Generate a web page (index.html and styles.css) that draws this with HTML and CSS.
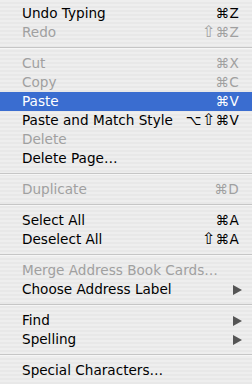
FILE: index.html
```html
<!DOCTYPE html>
<html>
<head>
<meta charset="utf-8">
<link rel="stylesheet" href="styles.css">
</head>
<body>
<div class="menu">
  <div class="item"><span class="label">Undo Typing</span><span class="key">⌘Z</span></div>
  <div class="item off"><span class="label">Redo</span><span class="key"><span class="shift">⇧</span>⌘Z</span></div>
  <div class="sep"></div>
  <div class="item off"><span class="label">Cut</span><span class="key">⌘X</span></div>
  <div class="item off"><span class="label">Copy</span><span class="key">⌘C</span></div>
  <div class="item sel"><span class="label">Paste</span><span class="key">⌘V</span></div>
  <div class="item"><span class="label">Paste and Match Style</span><span class="key">⌥<span class="shift">⇧</span>⌘V</span></div>
  <div class="item off"><span class="label">Delete</span></div>
  <div class="item"><span class="label">Delete Page…</span></div>
  <div class="sep"></div>
  <div class="item off"><span class="label">Duplicate</span><span class="key">⌘D</span></div>
  <div class="sep"></div>
  <div class="item"><span class="label">Select All</span><span class="key">⌘A</span></div>
  <div class="item"><span class="label">Deselect All</span><span class="key"><span class="shift">⇧</span>⌘A</span></div>
  <div class="sep"></div>
  <div class="item off"><span class="label">Merge Address Book Cards…</span></div>
  <div class="item"><span class="label">Choose Address Label</span><span class="arrow"></span></div>
  <div class="sep"></div>
  <div class="item"><span class="label">Find</span><span class="arrow"></span></div>
  <div class="item"><span class="label">Spelling</span><span class="arrow"></span></div>
  <div class="sep"></div>
  <div class="item"><span class="label">Special Characters…</span></div>
</div>
</body>
</html>
```
FILE: styles.css
```css
html, body {
  margin: 0;
  padding: 0;
  width: 252px;
  height: 384px;
  overflow: hidden;
}
body {
  background: repeating-linear-gradient(to bottom, #eeeeee 0, #eeeeee 2px, #e8e8e8 2px, #e8e8e8 4px);
  font-family: "DejaVu Sans", "Liberation Sans", sans-serif;
  font-size: 13.6px;
  color: #000;
}
.menu {
  display: flex;
  flex-direction: column;
  padding-top: 4px;
}
.item {
  height: 19px;
  display: flex;
  align-items: center;
  padding: 0 13px 0 22px;
  line-height: 19px;
}
.item .label {
  flex: 1;
  white-space: nowrap;
}
.item .key {
  white-space: nowrap;
  letter-spacing: 0.3px;
}
.shift {
  font-size: 16px;
  line-height: 1;
}
.off {
  color: #a0a0a0;
}
.sel {
  background: #3a6dd0;
  color: #fff;
}
.sep {
  height: 12px;
  display: flex;
  flex-direction: column;
  justify-content: center;
}
.sep::before {
  content: "";
  display: block;
  height: 1px;
  background: #c6c6c6;
  border-bottom: 1px solid #f6f6f6;
}
.arrow {
  width: 0;
  height: 0;
  border-top: 5px solid transparent;
  border-bottom: 5px solid transparent;
  border-left: 9px solid #555;
  margin-right: -3px;
}
```
